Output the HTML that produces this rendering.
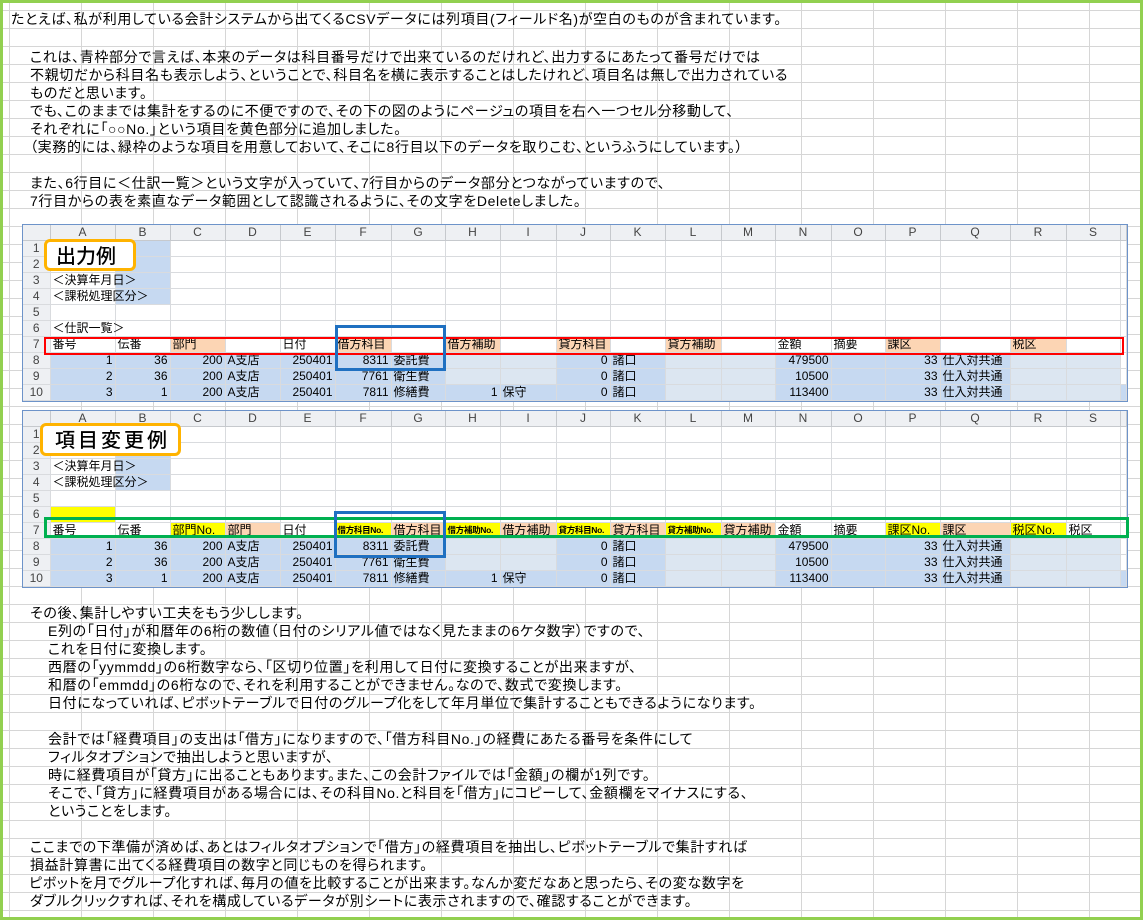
<!DOCTYPE html>
<html><head><meta charset="utf-8">
<style>
html,body{margin:0;padding:0}
body{width:1143px;height:920px;position:relative;overflow:hidden;background:#fff;
background-image:linear-gradient(to right,#d6d6d6 1px,transparent 1px),linear-gradient(to bottom,#d6d6d6 1px,transparent 1px);
background-size:72px 18px;background-position:9px 10px;
font-family:"Liberation Sans","Noto Sans CJK JP",sans-serif;}
.frame{position:absolute;left:0;top:0;width:1137px;height:914px;border:3px solid #92d050;pointer-events:none;z-index:10}
.tx{position:absolute;font-size:14px;line-height:18px;white-space:nowrap;color:#000;font-feature-settings:"palt";letter-spacing:0.65px}
.sheet{position:absolute;left:22px;background:#fff;border:1px solid #6d93c9;}
table{border-collapse:collapse;table-layout:fixed;width:1103px;font-size:12px;}
td,th{height:15px;padding:0 2px;line-height:15px;white-space:nowrap;border-right:1px solid #d9dbde;border-bottom:1px solid #d9dbde;overflow:visible;}
th{background:#eef0f3;color:#444;font-weight:normal;text-align:center;font-size:12px;}
tr.h th{border-bottom:1px solid #c6c9cd;border-right:1px solid #c6c9cd}
td{text-align:left;color:#000}
.r{text-align:right}
.b{background:#c6d9f1}
.l{background:#dce6f1}
.o{background:#fcd5b4}
.y{background:#ffff00}
.s{font-size:8.5px;font-weight:bold;letter-spacing:-0.3px}
.box{position:absolute;z-index:5;box-sizing:border-box}
.lab{position:absolute;z-index:6;background:#fff;border:3px solid #ffb300;border-radius:6px;box-sizing:border-box;font-family:"Noto Sans CJK JP",sans-serif;font-size:20px;line-height:25px;font-weight:500;}
</style></head><body>
<div class="frame"></div>

<div class="tx" style="left:11px;top:10px">たとえば、私が利用している会計システムから出てくるCSVデータには列項目(フィールド名)が空白のものが含まれています。</div>
<div class="tx" style="left:30px;top:48px">これは、青枠部分で言えば、本来のデータは科目番号だけで出来ているのだけれど、出力するにあたって番号だけでは</div>
<div class="tx" style="left:30px;top:66px">不親切だから科目名も表示しよう、ということで、科目名を横に表示することはしたけれど、項目名は無しで出力されている</div>
<div class="tx" style="left:30px;top:84px">ものだと思います。</div>
<div class="tx" style="left:30px;top:102px">でも、このままでは集計をするのに不便ですので、その下の図のようにページュの項目を右へ一つセル分移動して、</div>
<div class="tx" style="left:30px;top:120px">それぞれに「○○No.」という項目を黄色部分に追加しました。</div>
<div class="tx" style="left:30px;top:138px">（実務的には、緑枠のような項目を用意しておいて、そこに8行目以下のデータを取りこむ、というふうにしています。）</div>
<div class="tx" style="left:30px;top:174px">また、6行目に＜仕訳一覧＞という文字が入っていて、7行目からのデータ部分とつながっていますので、</div>
<div class="tx" style="left:30px;top:192px">7行目からの表を素直なデータ範囲として認識されるように、その文字をDeleteしました。</div>

<div class="tx" style="left:30px;top:604px">その後、集計しやすい工夫をもう少しします。</div>
<div class="tx" style="left:48px;top:622px">E列の「日付」が和暦年の6桁の数値（日付のシリアル値ではなく見たままの6ケタ数字）ですので、</div>
<div class="tx" style="left:48px;top:640px">これを日付に変換します。</div>
<div class="tx" style="left:48px;top:658px">西暦の「yymmdd」の6桁数字なら、「区切り位置」を利用して日付に変換することが出来ますが、</div>
<div class="tx" style="left:48px;top:676px">和暦の「emmdd」の6桁なので、それを利用することができません。なので、数式で変換します。</div>
<div class="tx" style="left:48px;top:694px">日付になっていれば、ピボットテーブルで日付のグループ化をして年月単位で集計することもできるようになります。</div>
<div class="tx" style="left:48px;top:730px">会計では「経費項目」の支出は「借方」になりますので、「借方科目No.」の経費にあたる番号を条件にして</div>
<div class="tx" style="left:48px;top:748px">フィルタオプションで抽出しようと思いますが、</div>
<div class="tx" style="left:48px;top:766px">時に経費項目が「貸方」に出ることもあります。また、この会計ファイルでは「金額」の欄が1列です。</div>
<div class="tx" style="left:48px;top:784px">そこで、「貸方」に経費項目がある場合には、その科目No.と科目を「借方」にコピーして、金額欄をマイナスにする、</div>
<div class="tx" style="left:48px;top:802px">ということをします。</div>
<div class="tx" style="left:30px;top:838px">ここまでの下準備が済めば、あとはフィルタオプションで「借方」の経費項目を抽出し、ピボットテーブルで集計すれば</div>
<div class="tx" style="left:30px;top:856px">損益計算書に出てくる経費項目の数字と同じものを得られます。</div>
<div class="tx" style="left:29px;top:874px">ピボットを月でグループ化すれば、毎月の値を比較することが出来ます。なんか変だなあと思ったら、その変な数字を</div>
<div class="tx" style="left:30px;top:892px">ダブルクリックすれば、それを構成しているデータが別シートに表示されますので、確認することができます。</div>

<!-- SHEET 1 -->
<div class="sheet" style="top:224px">
<table>
<colgroup><col style="width:27px"><col style="width:65px"><col style="width:55px"><col style="width:55px"><col style="width:55px"><col style="width:55px"><col style="width:56px"><col style="width:54px"><col style="width:55px"><col style="width:56px"><col style="width:54px"><col style="width:55px"><col style="width:56px"><col style="width:54px"><col style="width:56px"><col style="width:54px"><col style="width:55px"><col style="width:70px"><col style="width:56px"><col style="width:54px"><col style="width:6px"></colgroup>
<tr class="h"><th></th><th>A</th><th>B</th><th>C</th><th>D</th><th>E</th><th>F</th><th>G</th><th>H</th><th>I</th><th>J</th><th>K</th><th>L</th><th>M</th><th>N</th><th>O</th><th>P</th><th>Q</th><th>R</th><th>S</th><th></th></tr>
<tr><th>1</th><td></td><td class="b"></td><td></td><td></td><td></td><td></td><td></td><td></td><td></td><td></td><td></td><td></td><td></td><td></td><td></td><td></td><td></td><td></td><td></td><td></td></tr>
<tr><th>2</th><td></td><td class="b"></td><td></td><td></td><td></td><td></td><td></td><td></td><td></td><td></td><td></td><td></td><td></td><td></td><td></td><td></td><td></td><td></td><td></td><td></td></tr>
<tr><th>3</th><td>＜決算年月日＞</td><td class="b"></td><td></td><td></td><td></td><td></td><td></td><td></td><td></td><td></td><td></td><td></td><td></td><td></td><td></td><td></td><td></td><td></td><td></td><td></td></tr>
<tr><th>4</th><td>＜課税処理区分＞</td><td class="b"></td><td></td><td></td><td></td><td></td><td></td><td></td><td></td><td></td><td></td><td></td><td></td><td></td><td></td><td></td><td></td><td></td><td></td><td></td></tr>
<tr><th>5</th><td></td><td></td><td></td><td></td><td></td><td></td><td></td><td></td><td></td><td></td><td></td><td></td><td></td><td></td><td></td><td></td><td></td><td></td><td></td><td></td></tr>
<tr><th>6</th><td>＜仕訳一覧＞</td><td></td><td></td><td></td><td></td><td></td><td></td><td></td><td></td><td></td><td></td><td></td><td></td><td></td><td></td><td></td><td></td><td></td><td></td><td></td></tr>
<tr><th>7</th><td>番号</td><td>伝番</td><td class="o">部門</td><td></td><td>日付</td><td class="o">借方科目</td><td></td><td class="o">借方補助</td><td></td><td class="o">貸方科目</td><td></td><td class="o">貸方補助</td><td></td><td>金額</td><td>摘要</td><td class="o">課区</td><td></td><td class="o">税区</td><td></td><td></td></tr>
<tr><th>8</th><td class="b r">1</td><td class="b r">36</td><td class="b r">200</td><td class="b">A支店</td><td class="b r">250401</td><td class="b r">8311</td><td class="b">委託費</td><td class="l"></td><td class="l"></td><td class="b r">0</td><td class="b">諸口</td><td class="l"></td><td class="l"></td><td class="b r">479500</td><td class="b"></td><td class="b r">33</td><td class="b">仕入対共通</td><td class="l"></td><td class="l"></td><td></td></tr>
<tr><th>9</th><td class="b r">2</td><td class="b r">36</td><td class="b r">200</td><td class="b">A支店</td><td class="b r">250401</td><td class="b r">7761</td><td class="b">衛生費</td><td class="l"></td><td class="l"></td><td class="b r">0</td><td class="b">諸口</td><td class="l"></td><td class="l"></td><td class="b r">10500</td><td class="b"></td><td class="b r">33</td><td class="b">仕入対共通</td><td class="l"></td><td class="l"></td><td></td></tr>
<tr><th>10</th><td class="b r">3</td><td class="b r">1</td><td class="b r">200</td><td class="b">A支店</td><td class="b r">250401</td><td class="b r">7811</td><td class="b">修繕費</td><td class="b r">1</td><td class="b">保守</td><td class="b r">0</td><td class="b">諸口</td><td class="l"></td><td class="l"></td><td class="b r">113400</td><td class="b"></td><td class="b r">33</td><td class="b">仕入対共通</td><td class="l"></td><td class="l"></td><td class="b"></td></tr>
</table>
</div>
<div class="lab" style="left:44px;top:239px;width:92px;height:32px;padding-left:9px;">出力例</div>
<div class="box" style="left:44px;top:337px;width:1080px;height:18px;border:2px solid #ff0000"></div>
<div class="box" style="left:335px;top:325px;width:111px;height:46px;border:3px solid #1f70c1"></div>

<!-- SHEET 2 -->
<div class="sheet" style="top:410px">
<table>
<colgroup><col style="width:27px"><col style="width:65px"><col style="width:55px"><col style="width:55px"><col style="width:55px"><col style="width:55px"><col style="width:56px"><col style="width:54px"><col style="width:55px"><col style="width:56px"><col style="width:54px"><col style="width:55px"><col style="width:56px"><col style="width:54px"><col style="width:56px"><col style="width:54px"><col style="width:55px"><col style="width:70px"><col style="width:56px"><col style="width:54px"><col style="width:6px"></colgroup>
<tr class="h"><th></th><th>A</th><th>B</th><th>C</th><th>D</th><th>E</th><th>F</th><th>G</th><th>H</th><th>I</th><th>J</th><th>K</th><th>L</th><th>M</th><th>N</th><th>O</th><th>P</th><th>Q</th><th>R</th><th>S</th><th></th></tr>
<tr><th>1</th><td></td><td class="b"></td><td></td><td></td><td></td><td></td><td></td><td></td><td></td><td></td><td></td><td></td><td></td><td></td><td></td><td></td><td></td><td></td><td></td><td></td></tr>
<tr><th>2</th><td></td><td class="b"></td><td></td><td></td><td></td><td></td><td></td><td></td><td></td><td></td><td></td><td></td><td></td><td></td><td></td><td></td><td></td><td></td><td></td><td></td></tr>
<tr><th>3</th><td>＜決算年月日＞</td><td class="b"></td><td></td><td></td><td></td><td></td><td></td><td></td><td></td><td></td><td></td><td></td><td></td><td></td><td></td><td></td><td></td><td></td><td></td><td></td></tr>
<tr><th>4</th><td>＜課税処理区分＞</td><td class="b"></td><td></td><td></td><td></td><td></td><td></td><td></td><td></td><td></td><td></td><td></td><td></td><td></td><td></td><td></td><td></td><td></td><td></td><td></td></tr>
<tr><th>5</th><td></td><td></td><td></td><td></td><td></td><td></td><td></td><td></td><td></td><td></td><td></td><td></td><td></td><td></td><td></td><td></td><td></td><td></td><td></td><td></td></tr>
<tr><th>6</th><td class="y"></td><td></td><td></td><td></td><td></td><td></td><td></td><td></td><td></td><td></td><td></td><td></td><td></td><td></td><td></td><td></td><td></td><td></td><td></td><td></td></tr>
<tr><th>7</th><td>番号</td><td>伝番</td><td class="y">部門No.</td><td class="o">部門</td><td>日付</td><td class="y s">借方科目No.</td><td class="o">借方科目</td><td class="y s">借方補助No.</td><td class="o">借方補助</td><td class="y s">貸方科目No.</td><td class="o">貸方科目</td><td class="y s">貸方補助No.</td><td class="o">貸方補助</td><td>金額</td><td>摘要</td><td class="y">課区No.</td><td class="o">課区</td><td class="y">税区No.</td><td>税区</td><td></td></tr>
<tr><th>8</th><td class="b r">1</td><td class="b r">36</td><td class="b r">200</td><td class="b">A支店</td><td class="b r">250401</td><td class="b r">8311</td><td class="b">委託費</td><td class="l"></td><td class="l"></td><td class="b r">0</td><td class="b">諸口</td><td class="l"></td><td class="l"></td><td class="b r">479500</td><td class="b"></td><td class="b r">33</td><td class="b">仕入対共通</td><td class="l"></td><td class="l"></td><td></td></tr>
<tr><th>9</th><td class="b r">2</td><td class="b r">36</td><td class="b r">200</td><td class="b">A支店</td><td class="b r">250401</td><td class="b r">7761</td><td class="b">衛生費</td><td class="l"></td><td class="l"></td><td class="b r">0</td><td class="b">諸口</td><td class="l"></td><td class="l"></td><td class="b r">10500</td><td class="b"></td><td class="b r">33</td><td class="b">仕入対共通</td><td class="l"></td><td class="l"></td><td></td></tr>
<tr><th>10</th><td class="b r">3</td><td class="b r">1</td><td class="b r">200</td><td class="b">A支店</td><td class="b r">250401</td><td class="b r">7811</td><td class="b">修繕費</td><td class="b r">1</td><td class="b">保守</td><td class="b r">0</td><td class="b">諸口</td><td class="l"></td><td class="l"></td><td class="b r">113400</td><td class="b"></td><td class="b r">33</td><td class="b">仕入対共通</td><td class="l"></td><td class="l"></td><td class="b"></td></tr>
</table>
</div>
<div class="lab" style="left:40px;top:423px;width:141px;height:33px;padding-left:12px;letter-spacing:3px">項目変更例</div>
<div class="box" style="left:44px;top:517px;width:1085px;height:21px;border:3px solid #00b050"></div>
<div class="box" style="left:334px;top:511px;width:112px;height:47px;border:3px solid #1f70c1"></div>
</body></html>
